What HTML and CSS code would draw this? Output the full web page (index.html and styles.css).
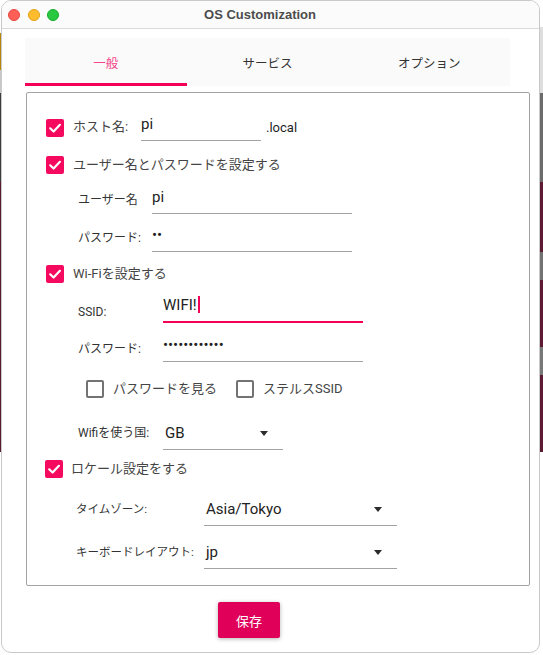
FILE: index.html
```html
<!DOCTYPE html>
<html lang="ja">
<head>
<meta charset="utf-8">
<title>OS Customization</title>
<link rel="stylesheet" href="styles.css">
</head>
<body>
<div class="window">
  <div class="titlebar">
    <div class="lights">
      <span class="light red"></span>
      <span class="light yellow"></span>
      <span class="light green"></span>
    </div>
    <div class="title">OS Customization</div>
    <div class="spacer"></div>
  </div>
  <div class="content">
    <div class="tabs">
      <div class="tab active">一般</div>
      <div class="tab">サービス</div>
      <div class="tab">オプション</div>
    </div>
    <div class="panel">
      <div class="row row-host">
        <span class="cb checked"><svg viewBox="0 0 18 18" width="18" height="18"><path d="M4.2 9.3 L7.6 12.5 L13.9 5.8" fill="none" stroke="#fff" stroke-width="2.2" stroke-linecap="round" stroke-linejoin="round"/></svg></span>
        <span class="cb-text host-label">ホスト名:</span>
        <div class="field w-host">pi</div>
        <span class="suffix">.local</span>
      </div>

      <div class="row row-cb gap-15">
        <span class="cb checked"><svg viewBox="0 0 18 18" width="18" height="18"><path d="M4.2 9.3 L7.6 12.5 L13.9 5.8" fill="none" stroke="#fff" stroke-width="2.2" stroke-linecap="round" stroke-linejoin="round"/></svg></span>
        <span class="cb-text">ユーザー名とパスワードを設定する</span>
      </div>

      <div class="row row-sub gap-11">
        <span class="label l-user lbl-3">ユーザー名</span>
        <div class="field w-200">pi</div>
      </div>

      <div class="row row-sub gap-9">
        <span class="label l-user lbl-3">パスワード:</span>
        <div class="field w-200 dots">••</div>
      </div>

      <div class="row row-cb gap-13">
        <span class="cb checked"><svg viewBox="0 0 18 18" width="18" height="18"><path d="M4.2 9.3 L7.6 12.5 L13.9 5.8" fill="none" stroke="#fff" stroke-width="2.2" stroke-linecap="round" stroke-linejoin="round"/></svg></span>
        <span class="cb-text">Wi-Fiを設定する</span>
      </div>

      <div class="row row-sub gap-10">
        <span class="label l-wifi lbl-7">SSID:</span>
        <div class="field w-200 focused">WIFI!<span class="caret"></span></div>
      </div>

      <div class="row row-sub gap-9">
        <span class="label l-wifi lbl-4">パスワード:</span>
        <div class="field w-200 dots">••••••••••••</div>
      </div>

      <div class="row row-checks gap-18">
        <span class="cb"></span>
        <span class="cb-text small-gap">パスワードを見る</span>
        <span class="cb second"></span>
        <span class="cb-text small-gap">ステルスSSID</span>
      </div>

      <div class="row row-sub gap-23">
        <span class="label l-wifi lbl-0">Wifiを使う国:</span>
        <div class="field select w-120 sel-pad">
          <span>GB</span><span class="arrow"></span>
        </div>
      </div>

      <div class="row row-cb row-locale gap-10">
        <span class="cb checked"><svg viewBox="0 0 18 18" width="18" height="18"><path d="M4.2 9.3 L7.6 12.5 L13.9 5.8" fill="none" stroke="#fff" stroke-width="2.2" stroke-linecap="round" stroke-linejoin="round"/></svg></span>
        <span class="cb-text">ロケール設定をする</span>
      </div>

      <div class="row row-loc gap-19">
        <span class="label l-loc lbl-0">タイムゾーン:</span>
        <div class="field select w-193 sel-pad">
          <span>Asia/Tokyo</span><span class="arrow"></span>
        </div>
      </div>

      <div class="row row-loc gap-14">
        <span class="label l-loc lbl-0">キーボードレイアウト:</span>
        <div class="field select w-193 sel-pad">
          <span>jp</span><span class="arrow"></span>
        </div>
      </div>
    </div>
    <div class="actions">
      <button class="btn">保存</button>
    </div>
  </div>
</div>
</body>
</html>
```

FILE: styles.css
```css
* { box-sizing: border-box; }

html, body {
  margin: 0;
  padding: 0;
}

body {
  width: 543px;
  height: 655px;
  overflow: hidden;
  background-color: #ffffff;
  background-image:
    linear-gradient(to bottom,
      #ffffff 0, #ffffff 33px,
      #b8860b 33px, #b8860b 70px,
      #c8c8c8 70px, #c8c8c8 93px,
      #3b3b3b 93px, #3b3b3b 182px,
      #5a1a32 182px, #5a1a32 452px,
      #ffffff 452px),
    linear-gradient(to bottom,
      #ffffff 0, #ffffff 27px,
      #dedede 27px, #dedede 93px,
      #6b6b6b 93px, #6b6b6b 182px,
      #5c1a33 182px, #5c1a33 252px,
      #727272 252px, #727272 280px,
      #5c1a33 280px, #5c1a33 347px,
      #787878 347px, #787878 375px,
      #5c1a33 375px, #5c1a33 452px,
      #ffffff 452px);
  background-size: 2px 100%, 4px 100%;
  background-position: left top, right top;
  background-repeat: no-repeat;
  font-family: Roboto, "Noto Sans CJK JP", sans-serif;
}

.window {
  margin-left: 1px;
  width: 539px;
  height: 653px;
  background: #ffffff;
  border: 1px solid #c9c9c9;
  border-radius: 10px;
  overflow: hidden;
}

.titlebar {
  height: 28px;
  border-bottom: 1px solid #d9d9d9;
  background: #fbfbfb;
  display: grid;
  grid-template-columns: 1fr auto 1fr;
  align-items: center;
}

.lights {
  display: flex;
  gap: 7.5px;
  padding-left: 6px;
}

.light {
  width: 12px;
  height: 12px;
  border-radius: 50%;
  display: block;
}
.red { background: #fe5f57; border: 0.5px solid #e2463f; }
.yellow { background: #febc2e; border: 0.5px solid #e1a116; }
.green { background: #28c840; border: 0.5px solid #12ac28; }

.title {
  font-family: "Liberation Sans", Arial, sans-serif;
  font-weight: bold;
  font-size: 13px;
  color: #4c4c4c;
  padding-right: 21px;
}

.content {
  padding-top: 9px;
}

.tabs {
  margin-left: 23px;
  width: 485px;
  height: 48px;
  background: #fafafa;
  display: flex;
}

.tab {
  flex: 1;
  display: flex;
  align-items: center;
  justify-content: center;
  font-size: 12.5px;
  color: #333333;
}

.tab.active {
  color: #f4478b;
  box-shadow: inset 0 -3px 0 #f50057;
}

.panel {
  margin: 6px 0 0 24px;
  width: 504px;
  height: 494px;
  border: 1px solid #a3a3a3;
  border-radius: 2px;
  padding: 19px 0 0 19px;
}

.row {
  display: flex;
  align-items: flex-start;
}

.row-host { align-items: center; height: 29px; }
.row-host .cb { margin-top: 2px; }
.row-cb { align-items: center; height: 18px; }
.row-locale { margin-left: -1px; }
.row-locale .cb-text { margin-left: 8px; }
.row-sub { padding-left: 32px; }
.row-loc { padding-left: 30px; }
.row-checks { align-items: center; height: 18px; padding-left: 40px; }

.gap-9 { margin-top: 9px; }
.gap-10 { margin-top: 10px; }
.gap-11 { margin-top: 11px; }
.gap-13 { margin-top: 13px; }
.gap-14 { margin-top: 14px; }
.gap-15 { margin-top: 15px; }
.gap-18 { margin-top: 18px; }
.gap-19 { margin-top: 19px; }
.gap-23 { margin-top: 23px; }

.cb {
  width: 18px;
  height: 18px;
  flex: none;
  border-radius: 2px;
  border: 2px solid #737373;
  display: block;
}

.cb.checked {
  border: none;
  background: #f50a5f;
}

.cb svg { display: block; }

.cb.second { margin-left: 19px; }

.cb-text {
  margin-left: 9px;
  font-size: 13px;
  color: #444444;
  line-height: 18px;
  white-space: nowrap;
}

.cb-text.small-gap { margin-left: 9px; }

.host-label { width: 68px; }

.label {
  font-size: 12px;
  color: #333333;
  line-height: 24px;
  white-space: nowrap;
  flex: none;
}

.l-user { width: 74px; }
.l-wifi { width: 85px; }
.l-loc { width: 128px; font-size: 11.5px; }

.lbl-0 { margin-top: 0; }
.lbl-3 { margin-top: 3px; }
.lbl-4 { margin-top: 4px; }
.lbl-7 { margin-top: 7px; }

.field {
  height: 29px;
  line-height: 24px;
  padding-bottom: 4px;
  border-bottom: 1px solid #a3a3a3;
  font-size: 15px;
  color: #222222;
  flex: none;
  white-space: nowrap;
}

.field.dots {
  font-size: 15px;
  letter-spacing: 0;
}

.field.focused {
  height: 30px;
  border-bottom: 2px solid #f50057;
}

.caret {
  display: inline-block;
  width: 2px;
  height: 17px;
  background: #f50057;
  vertical-align: -3px;
  margin-left: 1px;
}

.w-host { width: 120px; }
.w-120 { width: 120px; }
.w-193 { width: 193px; }
.w-200 { width: 200px; }

.select {
  display: flex;
  align-items: center;
  justify-content: space-between;
}

.sel-pad {
  padding-left: 2px;
  padding-right: 15px;
}

.arrow {
  width: 0;
  height: 0;
  border-left: 4.5px solid transparent;
  border-right: 4.5px solid transparent;
  border-top: 5px solid #2b2b2b;
}

.suffix {
  margin-left: 5px;
  font-size: 13px;
  color: #1f1f1f;
  margin-top: 1px;
}

.actions {
  padding: 16px 0 0 216px;
}

.btn {
  width: 62px;
  height: 36px;
  border: none;
  border-radius: 2px;
  background: #e0005a;
  color: #ffffff;
  font-family: Roboto, "Noto Sans CJK JP", sans-serif;
  font-size: 13px;
  box-shadow: 0 1px 4px rgba(0, 0, 0, 0.3);
  padding: 0;
}
```
